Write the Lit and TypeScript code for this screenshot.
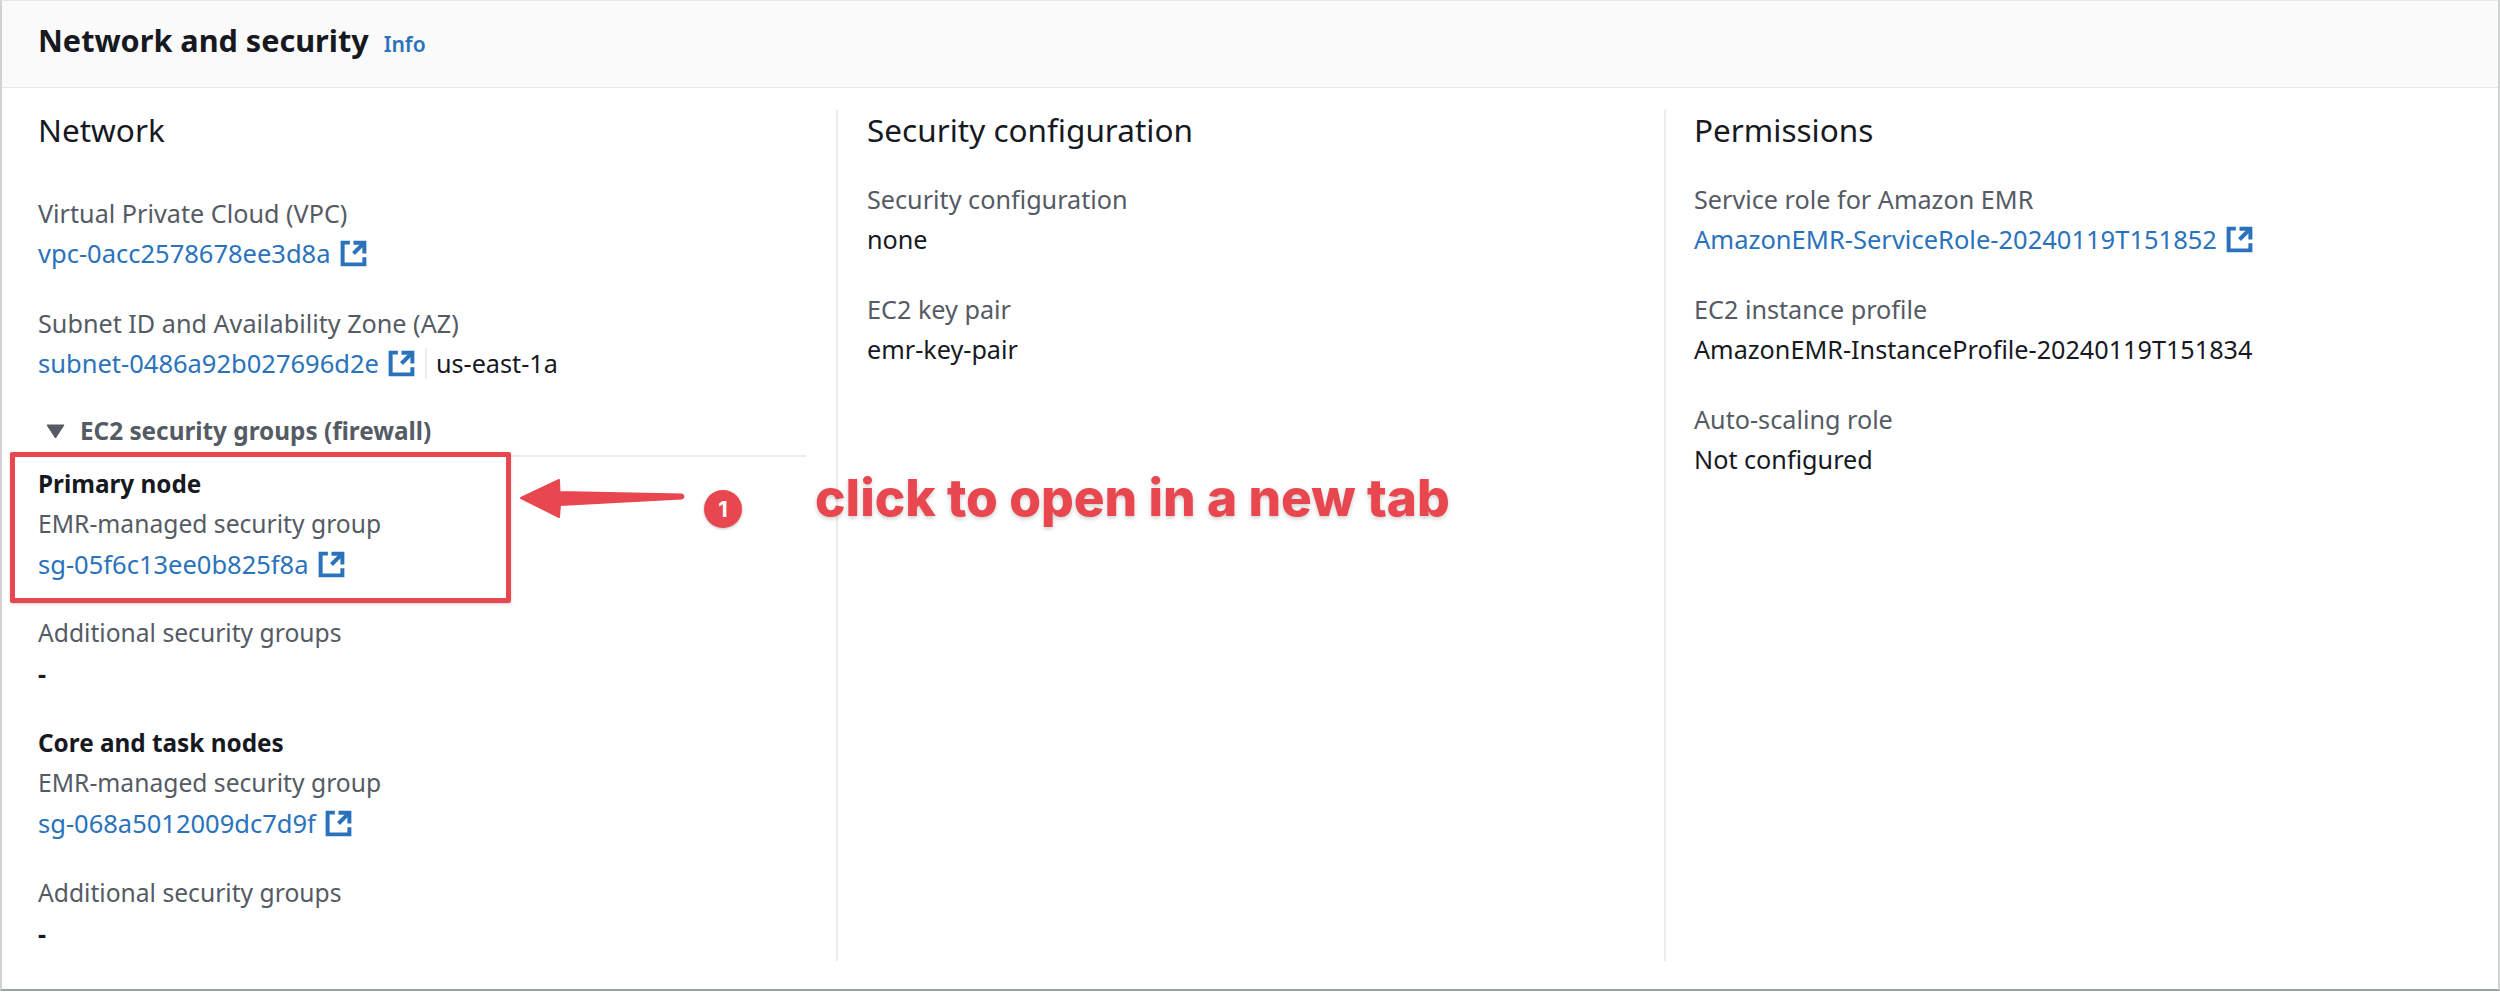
import { LitElement, html, css, svg } from "lit";
import { customElement } from "lit/decorators.js";

const extIcon = html`<svg class="ext" viewBox="0 0 16 16" fill="none" stroke="currentColor" stroke-width="2.2">
  ${svg`<path d="M14 8.010v-6H8"></path><path d="M14.020 2 8 8"></path><path d="M6 2H2v12h12v-4"></path>`}
</svg>`;

const link = (t: string) => html`<a class="link" href="#"><span>${t}</span>${extIcon}</a>`;

@customElement("app-root")
export class AppRoot extends LitElement {
  static styles = css`
    :host { display: block; position: relative; width: 2500px; height: 992px; overflow: hidden; background: #fff;
      font-family: "Noto Sans", sans-serif; font-size: 25.2px; line-height: 40px; color: #16191f; }
    .card { box-sizing: border-box; height: 991px; border-left: 2px solid #cfd4d2; border-right: 2px solid #cfd4d2;
      border-top: 1px solid #e6e8e8; border-bottom: 2px solid #9ba3a3; display: flex; flex-direction: column; }
    .head { display: flex; align-items: baseline; gap: 15px; padding: 19px 36px 26px; height: 41px; background: #fafafa;
      border-bottom: 1px solid #e6e8e8; }
    .head h2 { margin: 0; font-size: 30.6px; font-weight: 700; line-height: 40px; }
    .info { font-size: 21px; font-weight: 600; color: #2a72bb; text-decoration: none; }
    .cols { display: grid; grid-template-columns: 800px 828px 1fr; margin: 22px 0 0 36px; height: 851px; }
    .col { padding: 0 0 0 29px; border-right: 2px solid #eaeded; }
    .col:first-child { padding-left: 0; }
    .col:last-child { border-right: 0; padding-left: 28px; }
    h3 { margin: 0; font-size: 31.5px; font-weight: 400; line-height: 40px; }
    .stack { display: flex; flex-direction: column; gap: 30px; margin-top: 29px; }
    .first { margin-top: 43px; }
    .lbl { color: #545b64; }
    .tight { font-size: 24.65px; }
    .val { color: #16191f; }
    .link { display: inline-flex; align-items: center; gap: 8px; color: #2a72bb; text-decoration: none; vertical-align: top;
      height: 40px; font-size: 25.5px; }
    .ext { width: 29px; height: 29px; flex: none; }
    .az { display: flex; align-items: center; }
    .az .sep { margin: 0 9px 0 9px; width: 2px; height: 31px; background: #eaeded; }
    .expand { display: flex; align-items: center; gap: 15px; margin-top: 28px; padding: 0 0 4px 8px; margin-right: 30px;
      border-bottom: 2px solid #eaeded; color: #545b64; font-size: 24.3px; font-weight: 700; }
    .tri { width: 19px; height: 15px; flex: none; }
    .nodes { margin-top: 7px; display: flex; flex-direction: column; gap: 30px; }
    .nodes .node:first-child { margin-bottom: -1px; }
    .node b { display: block; font-size: 24.3px; font-weight: 700; }
    .dash { font-weight: 700; }
    .overlay { position: absolute; inset: 0; pointer-events: none; }
    .box { position: absolute; box-sizing: border-box; left: 10px; top: 452px; width: 501px; height: 151px;
      border: 5px solid #e8474f; border-radius: 2px; box-shadow: 0 1px 3px rgba(0,0,0,.18); }
    .anno { position: absolute; left: 0; top: 0; width: 2500px; height: 992px; }
    .note { position: absolute; left: 815px; top: 466px; font-family: Inter, sans-serif; font-size: 51.4px; line-height: 62px;
      font-weight: 800; color: #e8474f; text-shadow: 0 2px 4px rgba(0,0,0,.2); white-space: nowrap; }
    .num { position: absolute; left: 704px; top: 490px; width: 38px; height: 38px; border-radius: 50%; background: #e8474f;
      color: #fff; font-family: Inter, sans-serif; font-weight: 700; font-size: 22px; line-height: 38px; text-align: center;
      box-shadow: 0 1px 3px rgba(0,0,0,.25); }
  `;

  render() {
    return html`
      <div class="card">
        <div class="head"><h2>Network and security</h2><a class="info" href="#">Info</a></div>
        <div class="cols">
          <section class="col">
            <h3>Network</h3>
            <div class="stack first">
              <div><div class="lbl">Virtual Private Cloud (VPC)</div><div>${link("vpc-0acc2578678ee3d8a")}</div></div>
              <div><div class="lbl">Subnet ID and Availability Zone (AZ)</div>
                <div class="az">${link("subnet-0486a92b027696d2e")}<span class="sep"></span><span class="val">us-east-1a</span></div></div>
            </div>
            <div class="expand">
              <svg class="tri" viewBox="0 0 19 15"><path d="M1 1h17l-8.500 13z" fill="#545b64" stroke="#545b64" stroke-linejoin="round"></path></svg>
              <span>EC2 security groups (firewall)</span>
            </div>
            <div class="nodes">
              <div class="node"><b>Primary node</b><div class="lbl tight">EMR-managed security group</div><div>${link("sg-05f6c13ee0b825f8a")}</div></div>
              <div class="node"><div class="lbl tight">Additional security groups</div><div class="val dash">-</div></div>
              <div class="node"><b>Core and task nodes</b><div class="lbl tight">EMR-managed security group</div><div>${link("sg-068a5012009dc7d9f")}</div></div>
              <div class="node"><div class="lbl tight">Additional security groups</div><div class="val dash">-</div></div>
            </div>
          </section>
          <section class="col">
            <h3>Security configuration</h3>
            <div class="stack">
              <div><div class="lbl">Security configuration</div><div class="val">none</div></div>
              <div><div class="lbl">EC2 key pair</div><div class="val">emr-key-pair</div></div>
            </div>
          </section>
          <section class="col">
            <h3>Permissions</h3>
            <div class="stack">
              <div><div class="lbl">Service role for Amazon EMR</div><div>${link("AmazonEMR-ServiceRole-20240119T151852")}</div></div>
              <div><div class="lbl">EC2 instance profile</div><div class="val">AmazonEMR-InstanceProfile-20240119T151834</div></div>
              <div><div class="lbl">Auto-scaling role</div><div class="val">Not configured</div></div>
            </div>
          </section>
        </div>
      </div>
      <div class="overlay">
        <div class="box"></div>
        <svg class="anno" viewBox="0 0 2500 992">
          <path d="M521 498 559 480 559.500 492 682 494.500Q685 496.500 682 498.500L560 505 559 517Z" fill="#e8474f" stroke="#e8474f" stroke-width="2" stroke-linejoin="round"></path>
        </svg>
        <div class="num">1</div>
        <div class="note">click to open in a new tab</div>
      </div>
    `;
  }
}
